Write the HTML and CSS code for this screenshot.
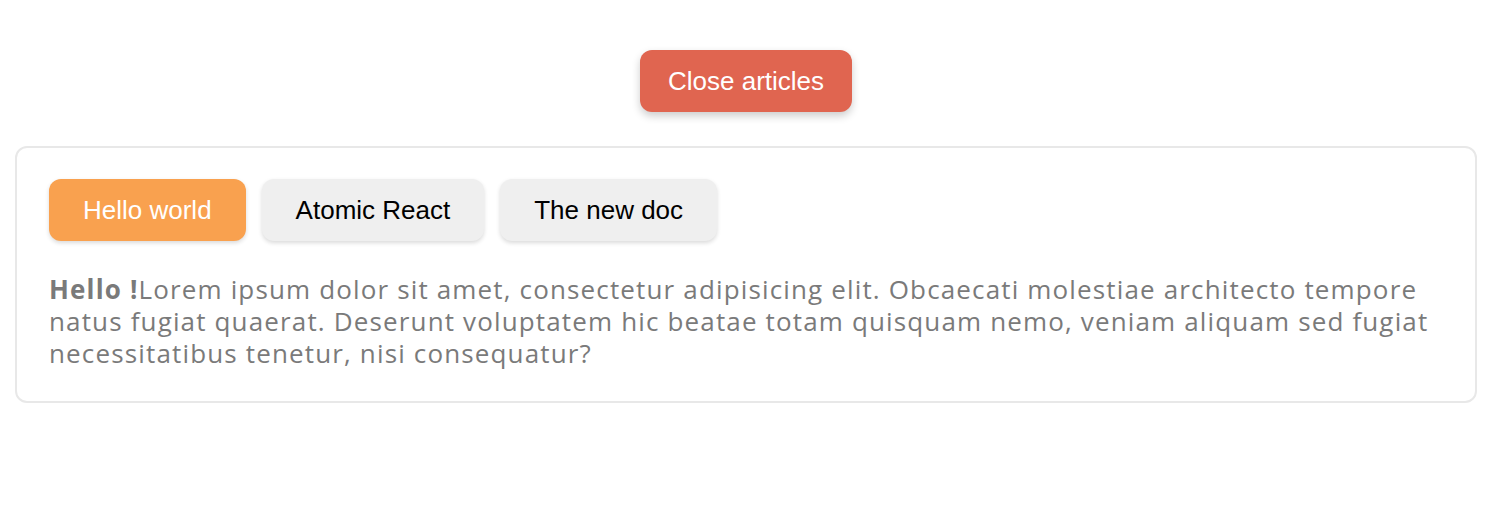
FILE: index.html
```html
<!DOCTYPE html>
<html>
<head>
<meta charset="utf-8">
<link rel="stylesheet" href="styles.css">
</head>
<body>
<div class="page">
  <div class="top">
    <button class="close-btn">Close articles</button>
  </div>
  <div class="card">
    <div class="tabs">
      <button class="tab active">Hello world</button>
      <button class="tab">Atomic React</button>
      <button class="tab">The new doc</button>
    </div>
    <p class="text"><strong>Hello !</strong>Lorem ipsum dolor sit amet, consectetur adipisicing elit. Obcaecati molestiae architecto tempore natus fugiat quaerat. Deserunt voluptatem hic beatae totam quisquam nemo, veniam aliquam sed fugiat necessitatibus tenetur, nisi consequatur?</p>
  </div>
</div>
</body>
</html>
```
FILE: styles.css
```css
html, body {
  margin: 0;
  padding: 0;
  background: #ffffff;
}
.page {
  width: 1462px;
  margin-left: 15px;
  padding-top: 50px;
}
.top {
  display: flex;
  justify-content: center;
  margin-bottom: 34px;
}
.close-btn {
  height: 62px;
  padding: 0 28px;
  border: none;
  border-radius: 12px;
  background: #e06550;
  color: #ffffff;
  font-family: "Liberation Sans", Arial, sans-serif;
  font-size: 26px;
  box-shadow: 0 4px 8px rgba(0, 0, 0, 0.2);
}
.card {
  border: 2px solid #e8e8e8;
  border-radius: 12px;
  padding: 31px 32px 32px 32px;
}
.tabs {
  display: flex;
  gap: 16px;
}
.tab {
  height: 62px;
  padding: 0 34px;
  border: none;
  border-radius: 12px;
  background: #efefef;
  color: #000000;
  font-family: "Liberation Sans", Arial, sans-serif;
  font-size: 26px;
  box-shadow: 0 2px 4px rgba(0, 0, 0, 0.15);
}
.tab.active {
  background: #f9a14f;
  color: #ffffff;
}
.text {
  margin: 32px 0 0 0;
  font-family: "Open Sans", Lato, sans-serif;
  font-size: 26px;
  letter-spacing: 1.15px;
  line-height: 32px;
  color: #7a7a7a;
}
.text strong {
  font-weight: 700;
}
```
